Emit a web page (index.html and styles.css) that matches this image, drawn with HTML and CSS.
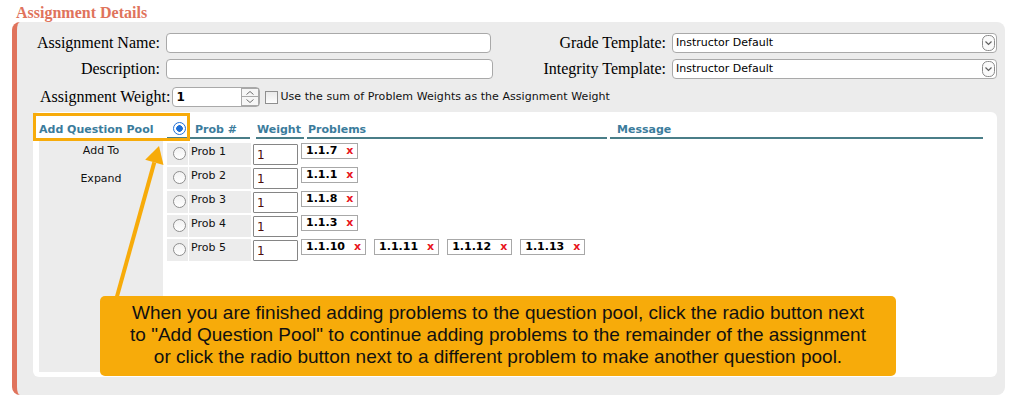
FILE: index.html
```html
<!DOCTYPE html>
<html>
<head>
<meta charset="utf-8">
<title>Assignment Details</title>
<link rel="stylesheet" href="styles.css">
</head>
<body>
<div class="page">
  <h2 class="title">Assignment Details</h2>
  <div class="panel">
    <div class="form-grid">
      <label class="lbl">Assignment Name:</label>
      <input class="txt" type="text">
      <label class="lbl">Grade Template:</label>
      <div class="select"><span class="select-text">Instructor Default</span><svg class="select-icon" width="13" height="16" viewBox="0 0 13 16"><rect x="0.5" y="0.5" width="12" height="15" rx="5" fill="#fafafa" stroke="#8a8a8a"/><path d="M3.5 6.5 L6.5 9.5 L9.5 6.5" fill="none" stroke="#606060" stroke-width="1.2"/></svg></div>
      <label class="lbl">Description:</label>
      <input class="txt txt-wide" type="text">
      <label class="lbl">Integrity Template:</label>
      <div class="select"><span class="select-text">Instructor Default</span><svg class="select-icon" width="13" height="16" viewBox="0 0 13 16"><rect x="0.5" y="0.5" width="12" height="15" rx="5" fill="#fafafa" stroke="#8a8a8a"/><path d="M3.5 6.5 L6.5 9.5 L9.5 6.5" fill="none" stroke="#606060" stroke-width="1.2"/></svg></div>
    </div>
    <div class="weight-row">
      <label class="lbl">Assignment Weight:</label>
      <div class="spin">
        <span class="spin-val">1</span>
        <span class="spin-btns">
          <span class="spin-btn"><svg width="16" height="8" viewBox="0 0 16 8"><path d="M4.5 5.5 L8 2.5 L11.5 5.5" fill="none" stroke="#707070"/></svg></span>
          <span class="spin-btn"><svg width="16" height="8" viewBox="0 0 16 8"><path d="M4.5 2.5 L8 5.5 L11.5 2.5" fill="none" stroke="#707070"/></svg></span>
        </span>
      </div>
      <span class="check"></span>
      <span class="check-text">Use the sum of Problem Weights as the Assignment Weight</span>
    </div>
    <div class="inner">
      <div class="side">
        <div class="side-head">Add Question Pool</div>
        <div class="side-body">
          <div class="side-item">Add To</div>
          <div class="side-item side-item-2">Expand</div>
        </div>
      </div>
      <div class="main">
        <div class="head">
          <div class="hcell h-prob"><span class="radio on"></span>Prob #</div>
          <div class="hcell h-weight">Weight</div>
          <div class="hcell h-problems">Problems</div>
          <div class="hcell h-message">Message</div>
        </div>
        <div class="rows">
          <div class="row">
            <div class="c-radio"><span class="radio"></span></div>
            <div class="c-prob">Prob 1</div>
            <div class="c-weight"><span class="w-input">1</span></div>
            <div class="c-problems"><span class="chip">1.1.7<span class="x">x</span></span></div>
          </div>
          <div class="row">
            <div class="c-radio"><span class="radio"></span></div>
            <div class="c-prob">Prob 2</div>
            <div class="c-weight"><span class="w-input">1</span></div>
            <div class="c-problems"><span class="chip">1.1.1<span class="x">x</span></span></div>
          </div>
          <div class="row">
            <div class="c-radio"><span class="radio"></span></div>
            <div class="c-prob">Prob 3</div>
            <div class="c-weight"><span class="w-input">1</span></div>
            <div class="c-problems"><span class="chip">1.1.8<span class="x">x</span></span></div>
          </div>
          <div class="row">
            <div class="c-radio"><span class="radio"></span></div>
            <div class="c-prob">Prob 4</div>
            <div class="c-weight"><span class="w-input">1</span></div>
            <div class="c-problems"><span class="chip">1.1.3<span class="x">x</span></span></div>
          </div>
          <div class="row">
            <div class="c-radio"><span class="radio"></span></div>
            <div class="c-prob">Prob 5</div>
            <div class="c-weight"><span class="w-input">1</span></div>
            <div class="c-problems">
              <span class="chip">1.1.10<span class="x">x</span></span>
              <span class="chip">1.1.11<span class="x">x</span></span>
              <span class="chip">1.1.12<span class="x">x</span></span>
              <span class="chip">1.1.13<span class="x">x</span></span>
            </div>
          </div>
        </div>
      </div>
      <div class="highlight"></div>
    </div>
    <svg class="arrow" width="200" height="300" viewBox="0 0 200 300">
      <line x1="99" y1="278" x2="137.3" y2="140.4" stroke="#f7ab0a" stroke-width="4"/>
      <polygon points="142,124 146.5,143 128.2,137.8" fill="#f7ab0a"/>
    </svg>
    <div class="tip">When you are finished adding problems to the question pool, click the radio button next<br>to "Add Question Pool" to continue adding problems to the remainder of the assignment<br>or click the radio button next to a different problem to make another question pool.</div>
  </div>
</div>
</body>
</html>
```

FILE: styles.css
```css
html, body {
  margin: 0;
  padding: 0;
  background: #ffffff;
}

.page {
  padding-left: 12px;
  width: 993px;
}

.title {
  margin: 4px 0 0 4px;
  height: 18px;
  font: bold 16px/18px "Liberation Serif", "Times New Roman", serif;
  color: #e0735c;
}

.panel {
  position: relative;
  box-sizing: border-box;
  width: 993px;
  height: 373px;
  background: #ececec;
  border-left: 5px solid #e0735c;
  border-radius: 8px;
  padding: 11px 8px 18px 16px;
}

.lbl {
  font: 16px/20px "Liberation Serif", "Times New Roman", serif;
  color: #000;
  white-space: nowrap;
}

.form-grid {
  display: grid;
  grid-template-columns: 127px 325px 169px 325px;
  grid-auto-rows: 20px;
  column-gap: 6px;
  row-gap: 6px;
}

.form-grid .lbl {
  text-align: right;
}

.txt {
  box-sizing: border-box;
  width: 325px;
  height: 20px;
  margin: 0;
  padding: 0 3px;
  border: 1px solid #a9a9a9;
  border-radius: 4px;
  background: #fff;
  outline: none;
}

.txt-wide {
  width: 327px;
}

.select {
  box-sizing: border-box;
  display: flex;
  align-items: center;
  height: 20px;
  padding: 0 1px 0 3px;
  border: 1px solid #a9a9a9;
  border-radius: 4px;
  background: #fff;
}

.select-text {
  flex: 1;
  font: 11px/14px "DejaVu Sans", Verdana, sans-serif;
  color: #000;
}

.select-icon {
  display: block;
}

.weight-row {
  display: flex;
  align-items: center;
  height: 20px;
  margin-top: 8px;
  padding-left: 7px;
}

.spin {
  box-sizing: border-box;
  display: flex;
  align-items: center;
  width: 88px;
  height: 20px;
  margin-left: 2px;
  border: 1px solid #a9a9a9;
  border-radius: 4px;
  background: #fff;
}

.spin-val {
  flex: 1;
  padding-left: 3px;
  font: bold 12px/14px "DejaVu Sans", Verdana, sans-serif;
  color: #000;
}

.spin-btns {
  display: flex;
  flex-direction: column;
  width: 18px;
}

.spin-btn {
  box-sizing: border-box;
  display: flex;
  align-items: center;
  justify-content: center;
  height: 9px;
  border: 1px solid #a8a8a8;
  background: #f6f6f6;
}

.spin-btn + .spin-btn {
  border-top: none;
}

.check {
  box-sizing: border-box;
  width: 13px;
  height: 13px;
  margin-left: 5px;
  border: 1px solid #8f8f8f;
  background: linear-gradient(#e9e9e9, #fdfdfd);
}

.check-text {
  margin-left: 2px;
  font: 11px/14px "DejaVu Sans", Verdana, sans-serif;
  letter-spacing: 0.05px;
  color: #111;
  white-space: nowrap;
}

.inner {
  position: relative;
  box-sizing: border-box;
  display: flex;
  height: 265px;
  margin-top: 5px;
  padding: 0 14px 5px 6px;
  background: #fff;
  border-radius: 6px;
}

.side {
  display: flex;
  flex-direction: column;
  width: 124px;
}

.side-head {
  box-sizing: border-box;
  height: 27px;
  padding-top: 11px;
  font: bold 11px/14px "DejaVu Sans", Verdana, sans-serif;
  color: #3b7c9c;
  white-space: nowrap;
}

.side-body {
  flex: 1;
  margin-top: 1px;
  padding-top: 4px;
  background: #ececec;
  text-align: center;
  font: 11px/14px "DejaVu Sans", Verdana, sans-serif;
  color: #111;
}

.side-item-2 {
  margin-top: 14px;
}

.main {
  width: 816px;
  margin-left: 4px;
}

.head {
  display: flex;
  height: 27px;
}

.hcell {
  box-sizing: border-box;
  height: 27px;
  padding-top: 11px;
  border-bottom: 2px solid #4a7e88;
  font: bold 11px/14px "DejaVu Sans", Verdana, sans-serif;
  color: #3b7c9c;
  white-space: nowrap;
}

.h-prob {
  display: flex;
  align-items: flex-start;
  width: 83px;
  padding-left: 6px;
}

.h-prob .radio {
  margin-top: -1px;
  margin-right: 9px;
}

.h-weight {
  width: 48px;
  margin-left: 6px;
  padding-left: 1px;
}

.h-problems {
  width: 300px;
  margin-left: 3px;
  padding-left: 1px;
}

.h-message {
  width: 373px;
  margin-left: 3px;
  padding-left: 7px;
}

.radio {
  box-sizing: border-box;
  display: block;
  width: 13px;
  height: 13px;
  border-radius: 50%;
  border: 1.5px solid #8e8e8e;
  background: linear-gradient(#f2f2f2, #ffffff);
}

.radio.on {
  border: 1.5px solid #1f6fd6;
  background: radial-gradient(circle at center, #1f6fd6 0 3px, #ffffff 3.6px);
}

.rows {
  margin-top: 4px;
}

.row {
  display: flex;
  height: 22px;
  margin-bottom: 2px;
}

.c-radio {
  box-sizing: border-box;
  width: 21px;
  padding: 4px 0 0 6px;
  background: #ececec;
}

.c-prob {
  box-sizing: border-box;
  width: 62px;
  margin-left: 1px;
  padding: 2px 0 0 2px;
  background: #ececec;
  font: 11px/14px "DejaVu Sans", Verdana, sans-serif;
  color: #111;
}

.c-weight {
  width: 46px;
  margin-left: 2px;
}

.w-input {
  box-sizing: border-box;
  display: block;
  width: 45px;
  height: 21px;
  margin-top: 1px;
  padding: 3px 0 0 3px;
  border: 1px solid #858585;
  border-radius: 1px;
  background: #fff;
  font: 12px/15px "DejaVu Sans", Verdana, sans-serif;
  color: #4a0c0c;
}

.c-problems {
  display: flex;
  align-items: flex-start;
  gap: 8px;
  margin-left: 2px;
}

.chip {
  display: block;
  height: 14px;
  padding: 0 4px 0 4px;
  border: 1px solid #a8a8a8;
  background: #fff;
  font: bold 11px/14px "DejaVu Sans", Verdana, sans-serif;
  color: #000;
  white-space: nowrap;
}

.chip .x {
  margin-left: 9px;
  color: #e8141c;
}

.highlight {
  position: absolute;
  left: 0;
  top: 1px;
  box-sizing: border-box;
  width: 157px;
  height: 28px;
  border: 3px solid #f7ab0a;
}

.arrow {
  position: absolute;
  left: 0;
  top: 0;
  pointer-events: none;
}

.tip {
  position: absolute;
  left: 83px;
  top: 274px;
  box-sizing: border-box;
  width: 796px;
  height: 80px;
  padding-top: 6px;
  background: #f7ab0a;
  border-radius: 5px;
  text-align: center;
  font: 19px/22px "Liberation Sans", Arial, sans-serif;
  color: #111;
}
```
